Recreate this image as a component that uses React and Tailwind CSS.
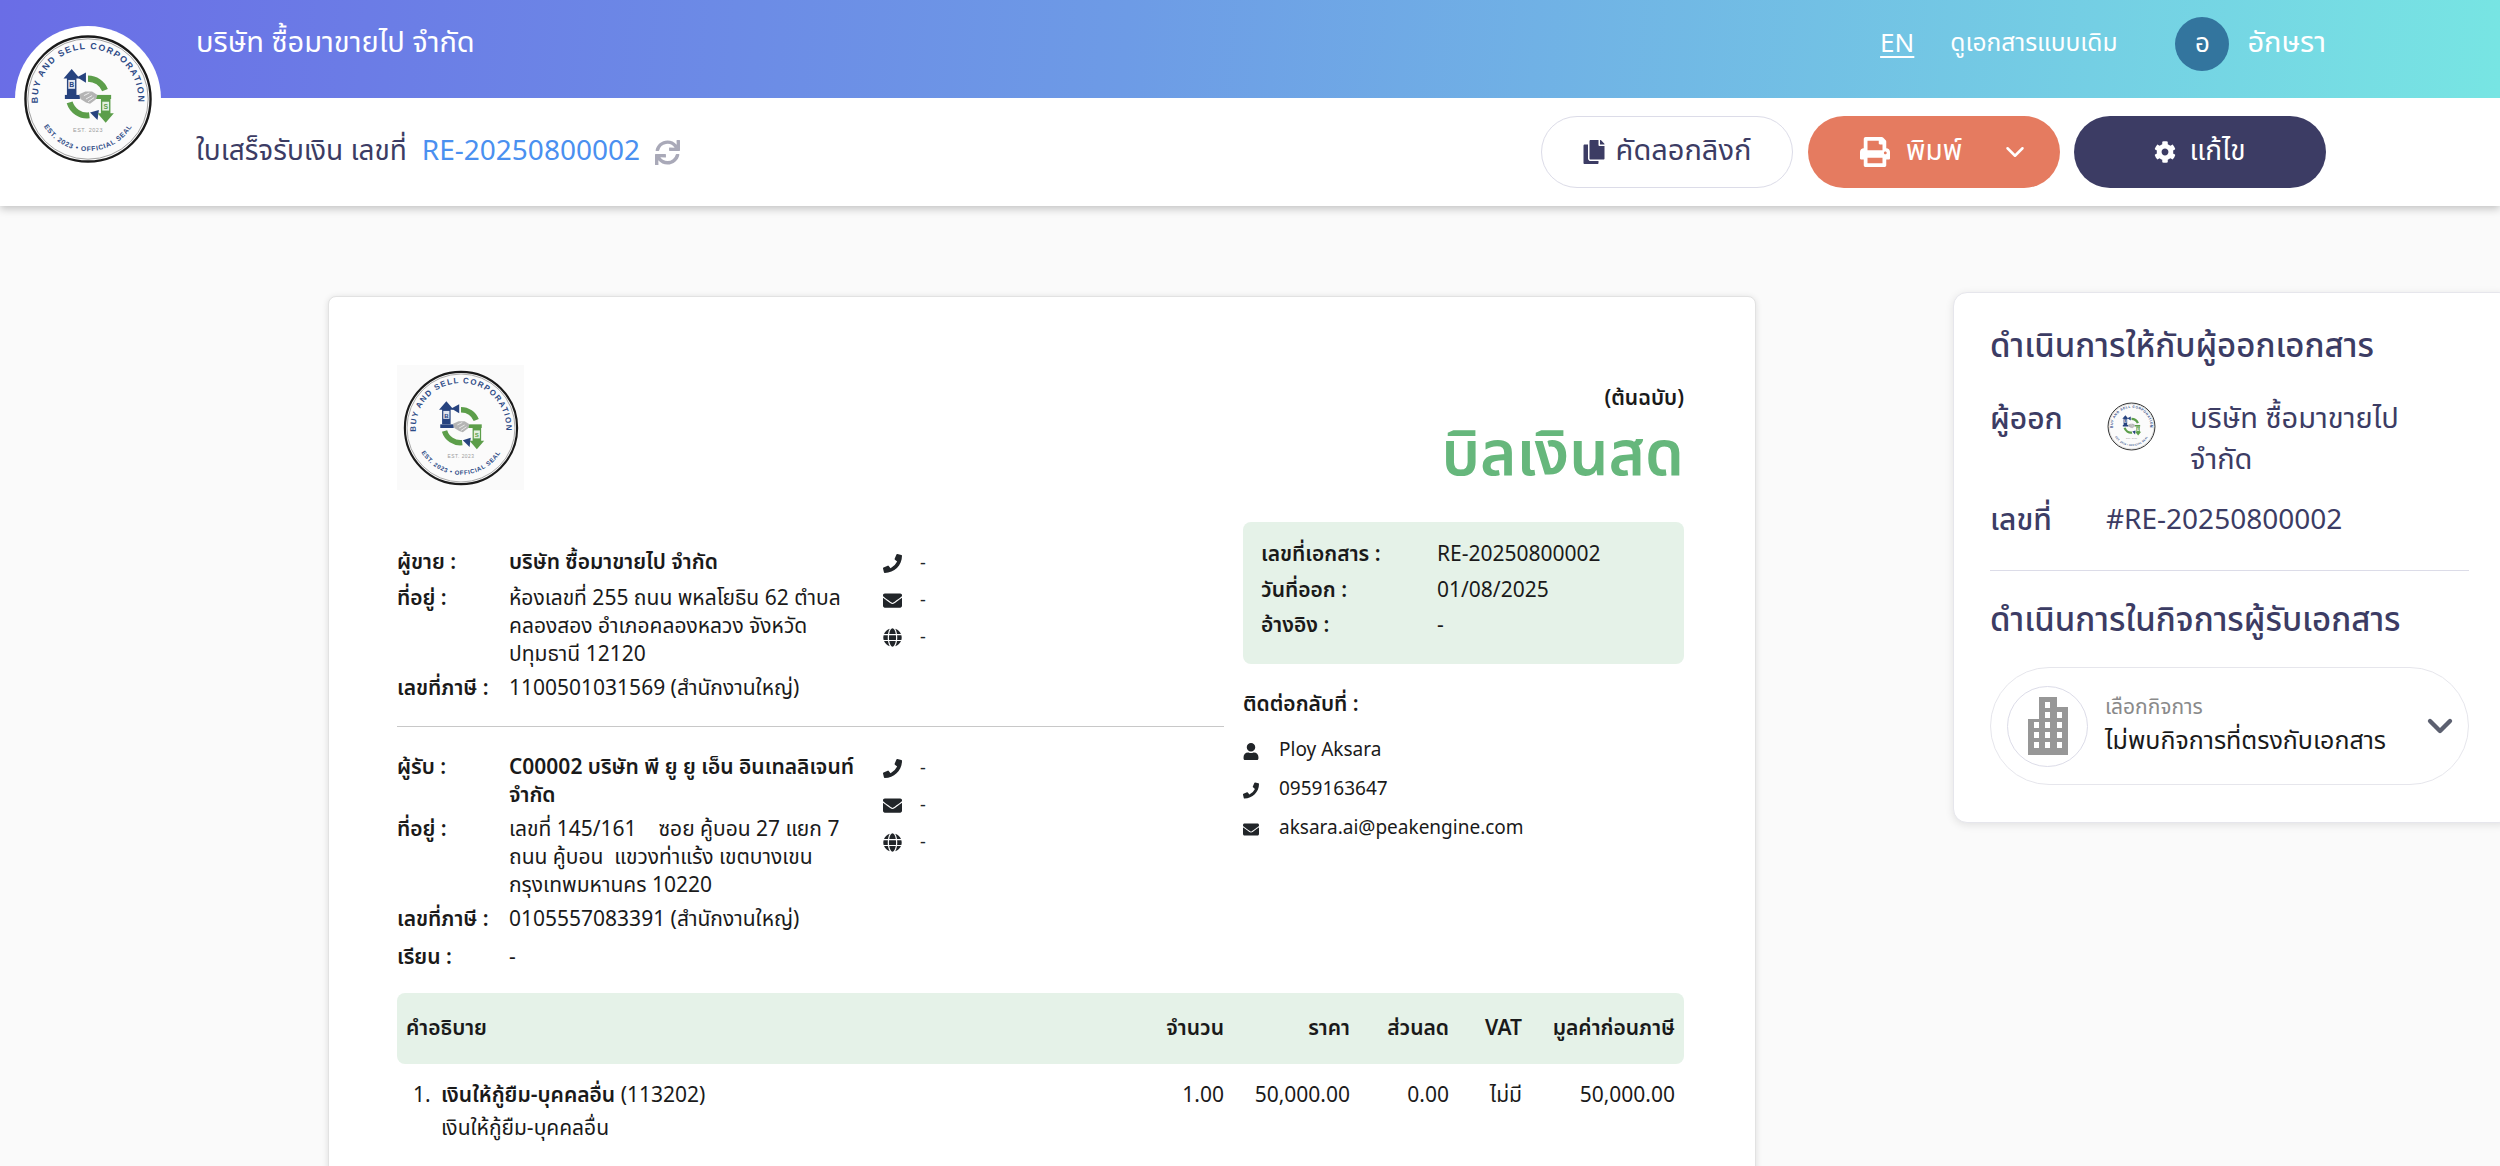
import { useId } from 'react'
import { FaCog, FaCopy, FaEnvelope, FaGlobe, FaPhoneAlt, FaPrint, FaSync, FaUser } from 'react-icons/fa'
import { FiChevronDown } from 'react-icons/fi'

const font = 'font-["Noto_Sans_Thai","Noto_Sans","Liberation_Sans",sans-serif]'

function Seal({ className }) {
    const id = useId()

    return <svg viewBox="0 0 200 200" className={className}>
        <defs>
            <path id={`${id}top`} d="M 26.4 108 A 74 74 0 1 1 173.6 108" />
            <path id={`${id}bottom`} d="M 26 118 A 76 76 0 0 0 174 118" />
        </defs>
        <circle cx="100" cy="100" r="92" fill="#fbfbfb" stroke="#1b1b1b" strokeWidth="3.5" />
        <circle cx="100" cy="100" r="88.5" fill="none" stroke="#777" strokeWidth="1" />
        <text fontFamily="Liberation Sans, sans-serif" fontWeight="700" fontSize="13" fill="#2d4a86" letterSpacing="2">
            <textPath href={`#${id}top`} startOffset="50%" textAnchor="middle">BUY AND SELL CORPORATION</textPath>
        </text>
        <text fontFamily="Liberation Sans, sans-serif" fontWeight="700" fontSize="10" fill="#2d4a86" letterSpacing="1">
            <textPath href={`#${id}bottom`} startOffset="50%" textAnchor="middle">EST. 2023 • OFFICIAL SEAL</textPath>
        </text>
        <text x="100" y="149" textAnchor="middle" fontFamily="Liberation Sans, sans-serif" fontSize="8" fill="#9a9a9a" letterSpacing="0.8">EST. 2023</text>
        <path d="M 100 70 A 27 27 0 0 1 125 87" fill="none" stroke="#5c9e4a" strokeWidth="9" />
        <path d="M 73 105 A 27 27 0 0 0 102 124" fill="none" stroke="#5c9e4a" strokeWidth="9" />
        <path d="M 84 68 L 97 61 L 97 76 Z" fill="#27437f" />
        <path d="M 103 120 L 116 116 L 114 131 Z" fill="#27437f" />
        <path d="M 76 56 L 88 70 L 83 70 L 83 94 L 69 94 L 69 70 L 64 70 Z" fill="#27437f" />
        <rect x="71" y="72" width="10" height="13" fill="#dfe5f0" />
        <text x="76" y="83" textAnchor="middle" fontFamily="Liberation Sans, sans-serif" fontWeight="700" fontSize="10" fill="#27437f">B</text>
        <path d="M 126 135 L 114 121 L 119 121 L 119 100 L 133 100 L 133 121 L 138 121 Z" fill="#5c9e4a" />
        <rect x="121" y="104" width="10" height="13" fill="#e3f0df" />
        <text x="126" y="115" textAnchor="middle" fontFamily="Liberation Sans, sans-serif" fontWeight="700" fontSize="10" fill="#5c9e4a">S</text>
        <rect x="66" y="94" width="22" height="6" fill="#27437f" />
        <rect x="112" y="94" width="22" height="6" fill="#5c9e4a" />
        <path d="M 87 93 L 96 89 L 106 89 L 114 94 L 111 101 L 103 107 L 97 105 L 89 100 Z" fill="#b4b4b4" />
        <path d="M 94 95 L 102 91 M 97 100 L 106 95 M 100 104 L 109 98" stroke="#fff" strokeWidth="1.1" />
    </svg>
}

function Building({ className }) {
    return <svg viewBox="0 0 40 58" className={className}>
        <path fill="#979797" d="M11 0h18v10h11v50l-6-2H6l-6 2V22h11z" />
        <g fill="#fff">
            <rect x="17" y="5" width="5" height="6" />
            <rect x="17" y="15" width="5" height="6" />
            <rect x="17" y="25" width="5" height="6" />
            <rect x="17" y="35" width="5" height="6" />
            <rect x="17" y="45" width="5" height="6" />
            <rect x="29" y="15" width="5" height="6" />
            <rect x="29" y="25" width="5" height="6" />
            <rect x="29" y="35" width="5" height="6" />
            <rect x="29" y="45" width="5" height="6" />
            <rect x="6" y="25" width="5" height="6" />
            <rect x="6" y="35" width="5" height="6" />
            <rect x="6" y="45" width="5" height="6" />
        </g>
    </svg>
}

function Contacts() {
    return <div className="flex flex-col gap-[17px] pt-[4px] text-[#212529]">
        <div className="flex items-center gap-[18px] h-[20px]"><FaPhoneAlt className="w-[19px] h-[19px] -scale-x-100" /><span className="text-[18px]">-</span></div>
        <div className="flex items-center gap-[18px] h-[20px]"><FaEnvelope className="w-[19px] h-[19px]" /><span className="text-[18px]">-</span></div>
        <div className="flex items-center gap-[18px] h-[20px]"><FaGlobe className="w-[19px] h-[19px]" /><span className="text-[18px]">-</span></div>
    </div>
}

function Party({ label, className, children }) {
    return <div className={`flex leading-[28px] text-[21px] ${className}`}>
        <div className="w-[112px] shrink-0 font-semibold">{label}</div>
        <div>{children}</div>
    </div>
}

function MetaRow({ label, value }) {
    return <div className="flex h-[35.5px] items-center">
        <div className="w-[176px] font-semibold">{label}</div>
        <div>{value}</div>
    </div>
}

export default function App() {
    return <div className={`${font} relative h-[1166px] overflow-hidden bg-[#fafafa] text-[#1a1a1a]`}>
        <div className="absolute left-[15px] top-[26px] z-20 w-[146px] h-[146px] rounded-full bg-white p-[5px]">
            <Seal className="w-full h-full" />
        </div>

        <header className="relative z-10 shadow-[0_3px_8px_rgba(0,0,0,0.22)]">
            <div className="flex items-center h-[98px] pb-[10px] pl-[196px] pr-[174px] text-white bg-[linear-gradient(95deg,#6a6de6_0%,#6d9be6_45%,#77e5e3_100%)]">
                <div className="text-[29px]">บริษัท ซื้อมาขายไป จำกัด</div>
                <div className="ml-auto text-[26px] underline underline-offset-4">EN</div>
                <div className="ml-[36px] text-[24.5px]">ดูเอกสารแบบเดิม</div>
                <div className="ml-[58px] w-[54px] h-[54px] rounded-full bg-[#33759e] flex items-center justify-center text-[26px]">อ</div>
                <div className="ml-[18px] text-[29px]">อักษรา</div>
            </div>
            <div className="flex items-center h-[108px] pl-[196px] pr-[174px] bg-white text-[#3c3c64]">
                <div className="text-[28px]">ใบเสร็จรับเงิน เลขที่</div>
                <div className="ml-[15px] text-[28px] text-[#4a90f0]">RE-20250800002</div>
                <FaSync className="ml-[15px] w-[25px] h-[25px] text-[#a9a9b8]" />
                <button className="ml-auto flex items-center justify-center gap-[11px] w-[252px] h-[72px] rounded-full border border-[#dcdce8] bg-white text-[29px]">
                    <FaCopy className="w-[22px] h-[24px]" />คัดลอกลิงก์
                </button>
                <button className="ml-[15px] flex items-center w-[252px] h-[72px] pl-[52px] rounded-full bg-[#e57b60] text-white text-[28px]">
                    <FaPrint className="w-[30px] h-[30px]" />
                    <span className="ml-[16px]">พิมพ์</span>
                    <FiChevronDown className="ml-[38px] w-[30px] h-[30px]" />
                </button>
                <button className="ml-[14px] flex items-center justify-center gap-[13px] w-[252px] h-[72px] rounded-full bg-[#3c3c64] text-white text-[28px]">
                    <FaCog className="w-[22px] h-[22px]" />แก้ไข
                </button>
            </div>
        </header>

        <main className="flex items-start pl-[328px] pt-[90px]">
            <section className="w-[1428px] h-[900px] shrink-0 rounded-[8px] border border-[#e2e2e2] bg-white pl-[68px] pr-[71px] pt-[68px] shadow-[0_1px_6px_rgba(0,0,0,0.12)]">
                <div className="flex gap-[19px]">
                    <div className="w-[827px]">
                        <div className="w-[127px] h-[125px] bg-[#fafafa] flex items-center justify-center">
                            <Seal className="w-[122px] h-[122px]" />
                        </div>
                        <div className="flex mt-[59px]">
                            <div className="w-[486px] flex flex-col">
                                <Party label="ผู้ขาย :"><span className="font-semibold">บริษัท ซื้อมาขายไป จำกัด</span></Party>
                                <Party label="ที่อยู่ :" className="mt-[8px]">ห้องเลขที่ 255 ถนน พหลโยธิน 62 ตำบล<br />คลองสอง อำเภอคลองหลวง จังหวัด<br />ปทุมธานี 12120</Party>
                                <Party label="เลขที่ภาษี :" className="mt-[6px]">1100501031569 (สำนักงานใหญ่)</Party>
                            </div>
                            <Contacts />
                        </div>
                        <hr className="mt-[23px] border-[#c8c8c8]" />
                        <div className="flex mt-[27px]">
                            <div className="w-[486px] flex flex-col">
                                <Party label="ผู้รับ :"><span className="font-semibold">C00002 บริษัท พี ยู ยู เอ็น อินเทลลิเจนท์<br />จำกัด</span></Party>
                                <Party label="ที่อยู่ :" className="mt-[6px]">เลขที่ 145/161 &nbsp;&nbsp; ซอย คู้บอน 27 แยก 7<br />ถนน คู้บอน &nbsp;แขวงท่าแร้ง เขตบางเขน<br />กรุงเทพมหานคร 10220</Party>
                                <Party label="เลขที่ภาษี :" className="mt-[6px]">0105557083391 (สำนักงานใหญ่)</Party>
                                <Party label="เรียน :" className="mt-[10px]">-</Party>
                            </div>
                            <Contacts />
                        </div>
                    </div>

                    <div className="w-[441px] text-[21px]">
                        <div className="text-right font-semibold leading-[28px] mt-[20px]">(ต้นฉบับ)</div>
                        <h1 className="text-right text-[62px] leading-[70px] font-semibold text-[#66b77c] mt-[8px]">บิลเงินสด</h1>
                        <div className="mt-[31px] h-[142px] rounded-[8px] bg-[#e5f2e8] px-[18px] pt-[15px]">
                            <MetaRow label="เลขที่เอกสาร :" value="RE-20250800002" />
                            <MetaRow label="วันที่ออก :" value="01/08/2025" />
                            <MetaRow label="อ้างอิง :" value="-" />
                        </div>
                        <div className="mt-[27px] font-semibold leading-[28px]">ติดต่อกลับที่ :</div>
                        <div className="mt-[18px] flex flex-col gap-[11px] text-[19px] leading-[28px]">
                            <div className="flex items-center gap-[20px]"><FaUser className="w-[16px] h-[17px] text-[#212529]" />Ploy Aksara</div>
                            <div className="flex items-center gap-[20px]"><FaPhoneAlt className="w-[16px] h-[17px] text-[#212529] -scale-x-100" />0959163647</div>
                            <div className="flex items-center gap-[20px]"><FaEnvelope className="w-[16px] h-[17px] text-[#212529]" />aksara.ai@peakengine.com</div>
                        </div>
                    </div>
                </div>

                <div className="mt-[21px] h-[71px] rounded-[8px] bg-[#e5f2e8] grid grid-cols-[727px_100px_126px_99px_73px_153px] items-center text-[21px] font-semibold">
                    <div className="pl-[9px]">คำอธิบาย</div>
                    <div className="text-right">จำนวน</div>
                    <div className="text-right">ราคา</div>
                    <div className="text-right">ส่วนลด</div>
                    <div className="text-right">VAT</div>
                    <div className="text-right whitespace-nowrap">มูลค่าก่อนภาษี</div>
                </div>
                <div className="mt-[15px] grid grid-cols-[727px_100px_126px_99px_73px_153px] text-[21px] leading-[33px]">
                    <div className="flex pl-[16px]">
                        <div className="w-[28px]">1.</div>
                        <div><span className="font-semibold">เงินให้กู้ยืม-บุคคลอื่น</span> (113202)<br />เงินให้กู้ยืม-บุคคลอื่น</div>
                    </div>
                    <div className="text-right">1.00</div>
                    <div className="text-right">50,000.00</div>
                    <div className="text-right">0.00</div>
                    <div className="text-right">ไม่มี</div>
                    <div className="text-right">50,000.00</div>
                </div>
            </section>

            <aside className="ml-[197px] mt-[-4px] w-[560px] shrink-0 h-[531px] rounded-[14px] border border-[#e6e6ec] bg-white pl-[36px] pt-[32px] text-[#3c3c64] shadow-[0_2px_8px_rgba(0,0,0,0.1)]">
                <h2 className="text-[33px] leading-[44px] font-medium">ดำเนินการให้กับผู้ออกเอกสาร</h2>
                <div className="flex mt-[30px]">
                    <div className="w-[116px] text-[30px] font-medium leading-[42px]">ผู้ออก</div>
                    <Seal className="w-[51px] h-[51px] mt-[2px]" />
                    <div className="ml-[33px] text-[29px] leading-[41px]">บริษัท ซื้อมาขายไป<br />จำกัด</div>
                </div>
                <div className="flex mt-[19px] items-center">
                    <div className="w-[116px] text-[30px] font-medium leading-[42px]">เลขที่</div>
                    <div className="text-[28px]">#RE-20250800002</div>
                </div>
                <hr className="mt-[28px] w-[479px] border-[#dcdce8]" />
                <h2 className="mt-[28px] text-[33px] leading-[44px] font-medium">ดำเนินการในกิจการผู้รับเอกสาร</h2>
                <div className="mt-[24px] flex items-center w-[479px] h-[118px] rounded-[59px] border border-[#e6e6ec] pl-[16px] pr-[8px]">
                    <div className="w-[81px] h-[81px] rounded-full border border-[#dcdce8] flex items-center justify-center">
                        <Building className="w-[40px] h-[58px]" />
                    </div>
                    <div className="ml-[17px]">
                        <div className="text-[21px] leading-[30px] text-[#8a8a8a]">เลือกกิจการ</div>
                        <div className="text-[25px] leading-[36px] text-[#1a1a1a]">ไม่พบกิจการที่ตรงกับเอกสาร</div>
                    </div>
                    <FiChevronDown strokeWidth={2.6} className="ml-auto w-[40px] h-[40px] text-[#5c6070]" />
                </div>
            </aside>
        </main>
    </div>
}
